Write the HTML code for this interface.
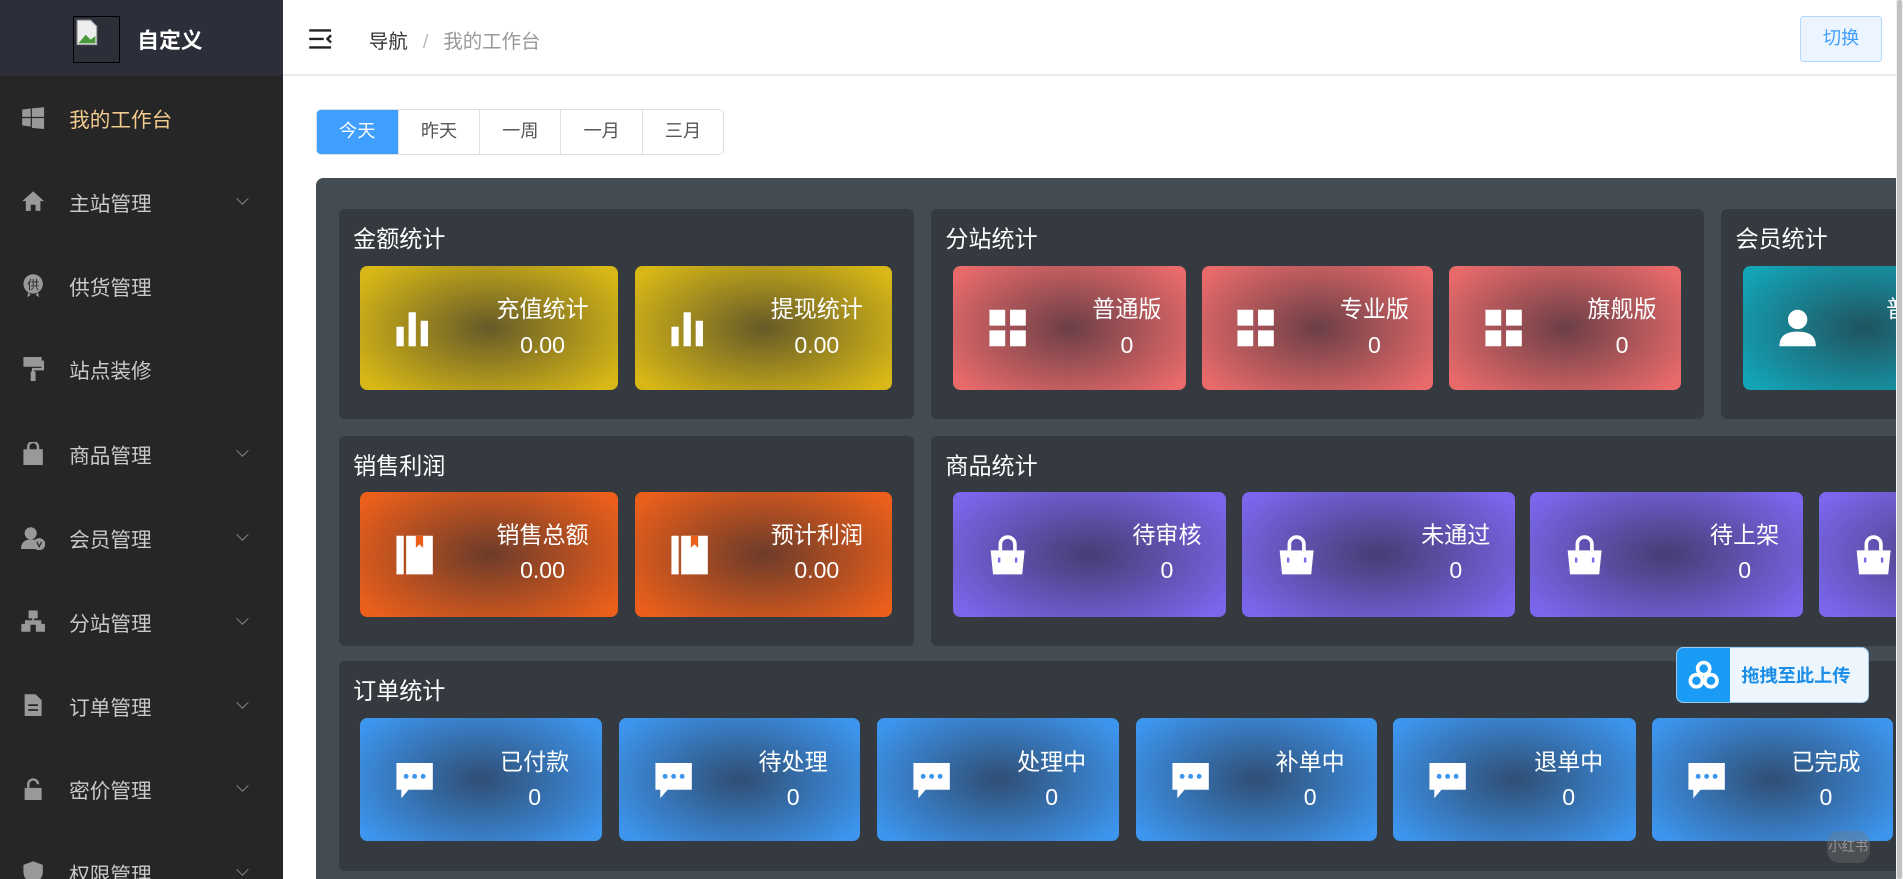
<!DOCTYPE html>
<html><head><meta charset="utf-8"><style>
*{margin:0;padding:0;box-sizing:border-box}
html,body{width:1903px;height:879px;overflow:hidden;background:#fff}
#w{width:1568px;height:724px;zoom:1.21365;position:relative;font-family:"Liberation Sans","Noto Sans CJK SC",sans-serif;overflow:hidden}
.side{position:absolute;left:0;top:0;width:233px;height:724px;background:#262626}
.logo{position:absolute;left:0;top:0;width:233px;height:63px;background:#2c2f3a}
.logo .img{position:absolute;left:60px;top:13px;width:39px;height:39px;border:1px solid #000}
.logo .t{position:absolute;left:113px;top:20px;color:#fff;font-weight:bold;font-size:18px}
.mi{position:absolute;left:0;width:233px;height:40px;color:#c9c9c9;font-size:17px;margin-top:-2px}
.mi .ic{position:absolute;left:17px;top:11px;width:20px;height:20px}
.mi .tx{position:absolute;left:57px;top:9px}
.mi .ch{position:absolute;left:195px;top:14px;width:9px;height:9px;border-right:1.3px solid #999;border-bottom:1.3px solid #999;transform:rotate(45deg) scale(.8)}
.top{position:absolute;left:233px;top:0;width:1335px;height:63px;background:#fff;border-bottom:2px solid #ebebeb}
.bc{position:absolute;left:71px;top:21px;font-size:16px;color:#333}
.bc span{color:#999}
.btn{position:absolute;left:1250px;top:13px;width:68px;height:38px;background:#ecf5ff;border:1px solid #b3d8ff;color:#409eff;border-radius:3px;font-size:15px;text-align:center;line-height:36px}
.sb{position:absolute;left:1562px;top:0;width:6px;height:724px;background:#f1f1f1}
.sb div{position:absolute;left:1px;top:0;width:4px;height:724px;background:#c1c1c1;border-radius:2px}
.tabs{position:absolute;left:260px;top:90px;height:38px;display:flex;border:1px solid #dcdfe6;border-radius:4px;overflow:hidden}
.tabs div{width:67px;text-align:center;line-height:36px;font-size:15px;color:#555;border-left:1px solid #dcdfe6}
.tabs div:first-child{background:#409eff;color:#fff;border-left:none}
.panel{position:absolute;left:260px;top:147px;width:1310px;height:600px;background:#444c53;border-radius:6px}
.card{position:absolute;background:#353a40;border-radius:5px}
.card .h{position:absolute;left:12px;top:9px;color:#fff;font-size:19px}
.tile{position:absolute;border-radius:6px;color:#fff;overflow:hidden}
.tile::before{content:"";position:absolute;inset:0;background:radial-gradient(ellipse 60% 70% at 50% 50%,rgba(40,40,50,.65),rgba(40,40,50,0) 100%)}
.tile .i{position:absolute;left:28px;top:50%;transform:translateY(-50%);width:34px;height:34px}
.tile .t{position:absolute;right:20px;top:22px;text-align:center;font-size:19px;line-height:29px}
.y{background:#d8b816}.r{background:#e86a6b}.o{background:#eb5f1b}.p{background:#7b66ec}.b{background:#3d95ee}.c{background:#13a4b6}
.up{position:absolute;left:1381px;top:533px;width:159px;height:46px;background:#eef6fd;border:1px solid #9cc8ee;border-radius:6px;overflow:hidden}
.up .a{position:absolute;left:0;top:0;width:44px;height:46px;background:#1a9bf5}
.up .t{position:absolute;left:53px;top:12px;font-size:15px;font-weight:bold;color:#1a8ee8}
</style></head><body><div id="w">
<div class="side">
<div class="logo"><div class="img"><svg width="18" height="22" viewBox="0 0 18 22" style="margin:2px"><path d="M1 1h11l5 5v15H1z" fill="#eee" stroke="#aaa"/><path d="M2 20l6-7 4 4 4-3v6z" fill="#4a9c3a"/></svg></div><div class="t">自定义</div></div>
<div class="mi" style="top:78px;color:#f2c98f"><svg class="ic" viewBox="0 0 20 20"><path d="M1 3l7-1v7H1zM9 2l10-1v8H9zM1 10h7v7l-7-1zM9 10h10v9L9 18z" fill="#999"/></svg><span class="tx">我的工作台</span></div>
<div class="mi" style="top:147px"><svg class="ic" viewBox="0 0 20 20"><path d="M10 2L1 10h3v8h4v-5h4v5h4v-8h3z" fill="#999"/></svg><span class="tx">主站管理</span><i class="ch"></i></div>
<div class="mi" style="top:216px"><svg class="ic" viewBox="0 0 20 20"><circle cx="10" cy="9" r="8" fill="#999"/><path d="M6 16l-1 4 3-2M14 16l1 4-3-2" fill="#999"/><text x="10" y="13" font-size="10" text-anchor="middle" fill="#262626">供</text></svg><span class="tx">供货管理</span></div>
<div class="mi" style="top:285px"><svg class="ic" viewBox="0 0 20 20"><path d="M3 1h13v6H3zM16 4h2v6h-8v3" fill="none" stroke="#999" stroke-width="2"/><path d="M3 1h13v6H3z" fill="#999"/><rect x="8" y="12" width="4" height="8" fill="#999"/></svg><span class="tx">站点装修</span></div>
<div class="mi" style="top:355px"><svg class="ic" viewBox="0 0 20 20"><path d="M2 6h16v13H2z" fill="#999"/><path d="M6 7V4a4 4 0 018 0v3" fill="none" stroke="#999" stroke-width="2"/></svg><span class="tx">商品管理</span><i class="ch"></i></div>
<div class="mi" style="top:424px"><svg class="ic" viewBox="0 0 20 20"><circle cx="8" cy="6" r="5" fill="#999"/><path d="M0 19c0-6 4-8 8-8s4 1 4 1v7z" fill="#999"/><circle cx="15" cy="15" r="5" fill="#999"/><path d="M13 13l2 4 2-4" stroke="#262626" fill="none"/></svg><span class="tx">会员管理</span><i class="ch"></i></div>
<div class="mi" style="top:493px"><svg class="ic" viewBox="0 0 20 20"><path d="M7 2h6v5H7zM1 13h6v5H1zM13 13h6v5h-6zM10 7v3M4 13v-3h12v3" fill="#999" stroke="#999" stroke-width="1.5"/></svg><span class="tx">分站管理</span><i class="ch"></i></div>
<div class="mi" style="top:562px"><svg class="ic" viewBox="0 0 20 20"><path d="M3 1h9l5 5v13H3z" fill="#999"/><path d="M6 10h8M6 14h8" stroke="#262626" stroke-width="1.5"/></svg><span class="tx">订单管理</span><i class="ch"></i></div>
<div class="mi" style="top:631px"><svg class="ic" viewBox="0 0 20 20"><path d="M3 9h14v10H3z" fill="#999"/><path d="M6 9V6a4 4 0 018 0" fill="none" stroke="#999" stroke-width="2"/></svg><span class="tx">密价管理</span><i class="ch"></i></div>
<div class="mi" style="top:700px"><svg class="ic" viewBox="0 0 20 20"><path d="M10 1l8 3v6c0 5-4 8-8 9-4-1-8-4-8-9V4z" fill="#999"/></svg><span class="tx">权限管理</span><i class="ch"></i></div>
</div>
<div class="top">
<svg style="position:absolute;left:21px;top:23px" width="20" height="18" viewBox="0 0 20 18"><path d="M1 2h18M1 9h12M1 16h18M19 6l-3 3 3 3" stroke="#222" stroke-width="2" fill="none"/></svg>
<div class="bc">导航 <span style="color:#bbb;margin:0 8px">/</span> <span>我的工作台</span></div>
<div class="btn">切换</div>
</div>
<div class="sb"><div></div></div>
<div class="tabs"><div>今天</div><div>昨天</div><div>一周</div><div>一月</div><div>三月</div></div>
<div class="panel"></div>

<div class="card" style="left:279px;top:172px;width:474px;height:173px"><div class="h">金额统计</div></div>
<div class="card" style="left:767px;top:172px;width:637px;height:173px"><div class="h">分站统计</div></div>
<div class="card" style="left:1418px;top:172px;width:200px;height:173px"><div class="h">会员统计</div></div>
<div class="card" style="left:279px;top:359px;width:474px;height:173px"><div class="h">销售利润</div></div>
<div class="card" style="left:767px;top:359px;width:850px;height:173px"><div class="h">商品统计</div></div>
<div class="card" style="left:279px;top:545px;width:1340px;height:173px"><div class="h">订单统计</div></div>

<div class="tile y" style="left:297px;top:219px;width:212px;height:102px"><svg class="i" viewBox="0 0 34 34"><path d="M2 16h6v16H2zM12 4h6v28h-6zM22 11h6v21h-6z" fill="#fff"/></svg><div class="t" style="right:24px">充值统计<br>0.00</div></div>
<div class="tile y" style="left:523px;top:219px;width:212px;height:102px"><svg class="i" viewBox="0 0 34 34"><path d="M2 16h6v16H2zM12 4h6v28h-6zM22 11h6v21h-6z" fill="#fff"/></svg><div class="t" style="right:24px">提现统计<br>0.00</div></div>
<div class="tile r" style="left:785px;top:219px;width:192px;height:102px"><svg class="i" viewBox="0 0 34 34"><path d="M2 2h13v13H2zM19 2h13v13H19zM2 19h13v13H2zM19 19h13v13H19z" fill="#fff"/></svg><div class="t">普通版<br>0</div></div>
<div class="tile r" style="left:990px;top:219px;width:191px;height:102px"><svg class="i" viewBox="0 0 34 34"><path d="M2 2h13v13H2zM19 2h13v13H19zM2 19h13v13H2zM19 19h13v13H19z" fill="#fff"/></svg><div class="t">专业版<br>0</div></div>
<div class="tile r" style="left:1194px;top:219px;width:191px;height:102px"><svg class="i" viewBox="0 0 34 34"><path d="M2 2h13v13H2zM19 2h13v13H19zM2 19h13v13H2zM19 19h13v13H19z" fill="#fff"/></svg><div class="t">旗舰版<br>0</div></div>
<div class="tile c" style="left:1436px;top:219px;width:200px;height:102px"><svg class="i" viewBox="0 0 34 34"><circle cx="17" cy="10" r="8" fill="#fff"/><path d="M2 32c0-9 6-12 15-12s15 3 15 12z" fill="#fff"/></svg><div class="t" style="right:auto;left:118px">普<br></div></div>
<div class="tile o" style="left:297px;top:405px;width:212px;height:103px"><svg class="i" viewBox="0 0 34 34"><path d="M2 2h6v32H2zM10 2h22v32H10z" fill="#fff"/><path d="M18 2v10l3-3 3 3V2z" fill="#eb5f1b"/></svg><div class="t" style="right:24px">销售总额<br>0.00</div></div>
<div class="tile o" style="left:523px;top:405px;width:212px;height:103px"><svg class="i" viewBox="0 0 34 34"><path d="M2 2h6v32H2zM10 2h22v32H10z" fill="#fff"/><path d="M18 2v10l3-3 3 3V2z" fill="#eb5f1b"/></svg><div class="t" style="right:24px">预计利润<br>0.00</div></div>
<div class="tile p" style="left:785px;top:405px;width:225px;height:103px"><svg class="i" viewBox="0 0 34 34"><path d="M3 14h28l-2 20H5z" fill="#fff"/><path d="M11 14V9a6 6 0 0112 0v5" fill="none" stroke="#fff" stroke-width="3"/><path d="M10 20v4M24 20v4" stroke="#7b66ec" stroke-width="2"/></svg><div class="t">待审核<br>0</div></div>
<div class="tile p" style="left:1023px;top:405px;width:225px;height:103px"><svg class="i" viewBox="0 0 34 34"><path d="M3 14h28l-2 20H5z" fill="#fff"/><path d="M11 14V9a6 6 0 0112 0v5" fill="none" stroke="#fff" stroke-width="3"/><path d="M10 20v4M24 20v4" stroke="#7b66ec" stroke-width="2"/></svg><div class="t">未通过<br>0</div></div>
<div class="tile p" style="left:1261px;top:405px;width:225px;height:103px"><svg class="i" viewBox="0 0 34 34"><path d="M3 14h28l-2 20H5z" fill="#fff"/><path d="M11 14V9a6 6 0 0112 0v5" fill="none" stroke="#fff" stroke-width="3"/><path d="M10 20v4M24 20v4" stroke="#7b66ec" stroke-width="2"/></svg><div class="t">待上架<br>0</div></div>
<div class="tile p" style="left:1499px;top:405px;width:225px;height:103px"><svg class="i" viewBox="0 0 34 34"><path d="M3 14h28l-2 20H5z" fill="#fff"/><path d="M11 14V9a6 6 0 0112 0v5" fill="none" stroke="#fff" stroke-width="3"/><path d="M10 20v4M24 20v4" stroke="#7b66ec" stroke-width="2"/></svg><div class="t">已上架<br>0</div></div>
<div class="tile b" style="left:297px;top:592px;width:199px;height:101px"><svg class="i" viewBox="0 0 34 34"><path d="M2 3h30v22H12l-6 7v-7H2z" fill="#fff"/><circle cx="10" cy="14" r="2" fill="#3d95ee"/><circle cx="17" cy="14" r="2" fill="#3d95ee"/><circle cx="24" cy="14" r="2" fill="#3d95ee"/></svg><div class="t" style="right:27px">已付款<br>0</div></div>
<div class="tile b" style="left:510px;top:592px;width:199px;height:101px"><svg class="i" viewBox="0 0 34 34"><path d="M2 3h30v22H12l-6 7v-7H2z" fill="#fff"/><circle cx="10" cy="14" r="2" fill="#3d95ee"/><circle cx="17" cy="14" r="2" fill="#3d95ee"/><circle cx="24" cy="14" r="2" fill="#3d95ee"/></svg><div class="t" style="right:27px">待处理<br>0</div></div>
<div class="tile b" style="left:723px;top:592px;width:199px;height:101px"><svg class="i" viewBox="0 0 34 34"><path d="M2 3h30v22H12l-6 7v-7H2z" fill="#fff"/><circle cx="10" cy="14" r="2" fill="#3d95ee"/><circle cx="17" cy="14" r="2" fill="#3d95ee"/><circle cx="24" cy="14" r="2" fill="#3d95ee"/></svg><div class="t" style="right:27px">处理中<br>0</div></div>
<div class="tile b" style="left:936px;top:592px;width:199px;height:101px"><svg class="i" viewBox="0 0 34 34"><path d="M2 3h30v22H12l-6 7v-7H2z" fill="#fff"/><circle cx="10" cy="14" r="2" fill="#3d95ee"/><circle cx="17" cy="14" r="2" fill="#3d95ee"/><circle cx="24" cy="14" r="2" fill="#3d95ee"/></svg><div class="t" style="right:27px">补单中<br>0</div></div>
<div class="tile b" style="left:1148px;top:592px;width:200px;height:101px"><svg class="i" viewBox="0 0 34 34"><path d="M2 3h30v22H12l-6 7v-7H2z" fill="#fff"/><circle cx="10" cy="14" r="2" fill="#3d95ee"/><circle cx="17" cy="14" r="2" fill="#3d95ee"/><circle cx="24" cy="14" r="2" fill="#3d95ee"/></svg><div class="t" style="right:27px">退单中<br>0</div></div>
<div class="tile b" style="left:1361px;top:592px;width:199px;height:101px"><svg class="i" viewBox="0 0 34 34"><path d="M2 3h30v22H12l-6 7v-7H2z" fill="#fff"/><circle cx="10" cy="14" r="2" fill="#3d95ee"/><circle cx="17" cy="14" r="2" fill="#3d95ee"/><circle cx="24" cy="14" r="2" fill="#3d95ee"/></svg><div class="t" style="right:27px">已完成<br>0</div></div>

<div class="up"><div class="a"><svg width="44" height="46" viewBox="0 0 44 46"><circle cx="22" cy="17" r="5" fill="none" stroke="#fff" stroke-width="3"/><circle cx="16" cy="27" r="5" fill="none" stroke="#fff" stroke-width="3"/><circle cx="28" cy="27" r="5" fill="none" stroke="#fff" stroke-width="3"/></svg></div><div class="t">拖拽至此上传</div></div>
<div style="position:absolute;left:1505px;top:685px;width:36px;height:26px;border-radius:10px;background:rgba(120,120,120,.35);color:rgba(200,200,200,.6);font-size:11px;text-align:center;line-height:26px">小红书</div>
<div class="sb" style="z-index:5"><div></div></div>
</div></body></html>
